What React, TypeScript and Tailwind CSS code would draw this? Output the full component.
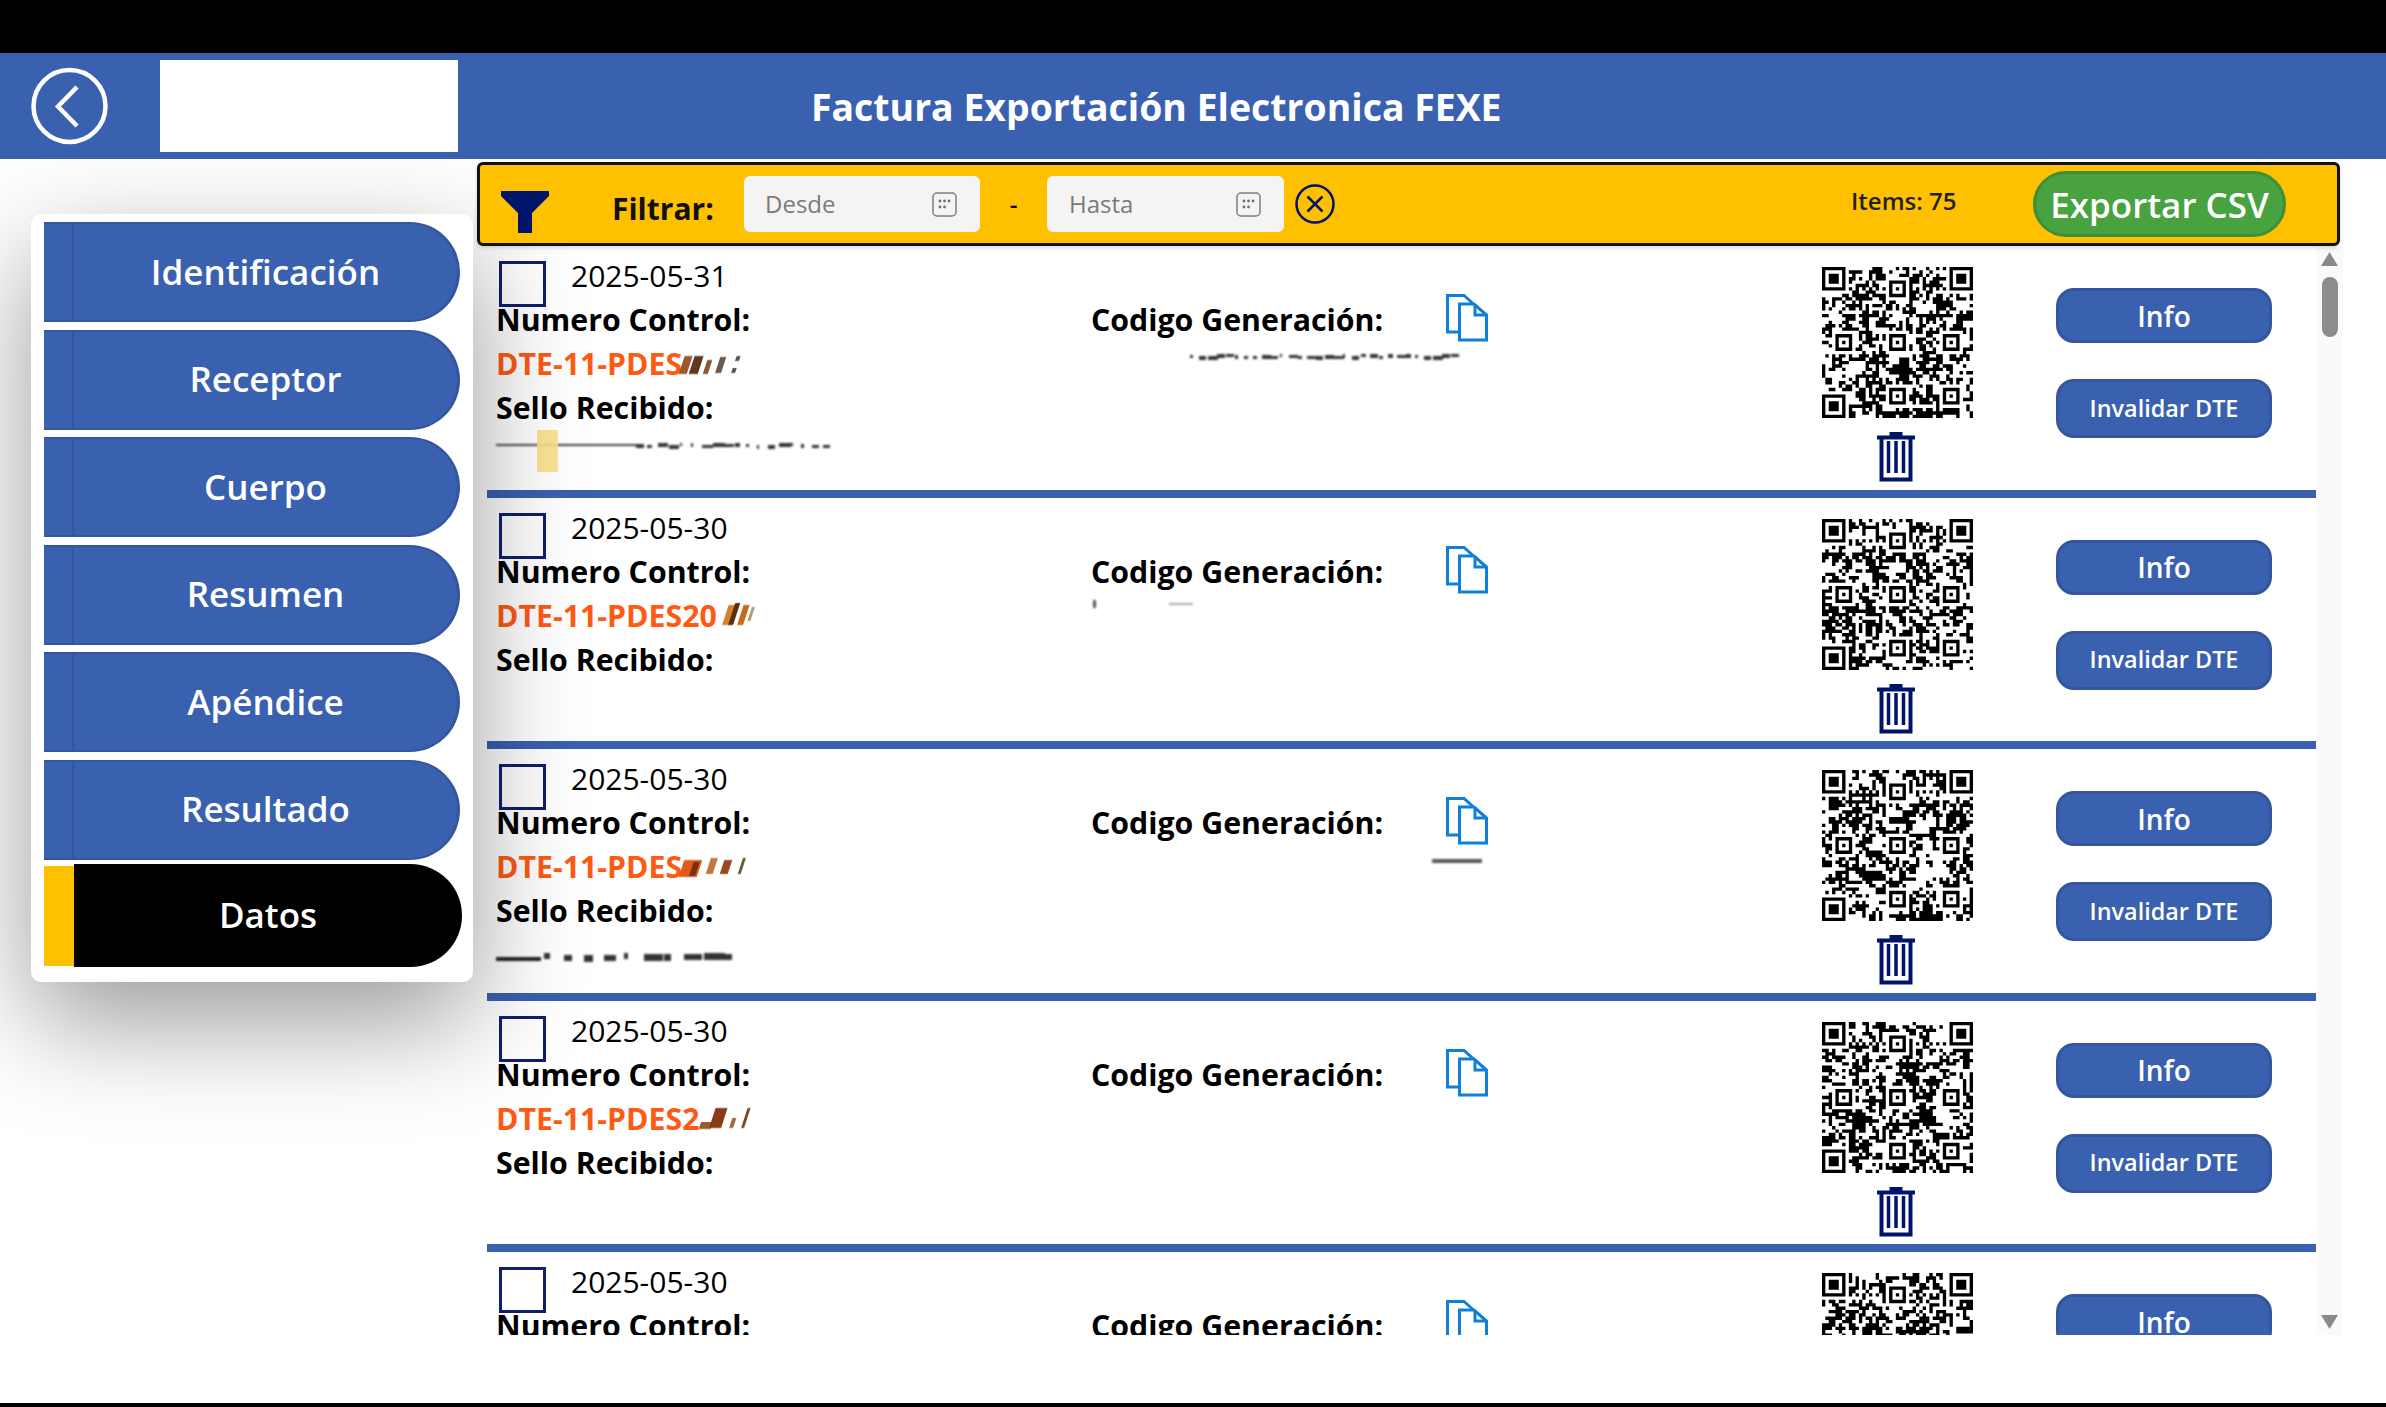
import { useMemo } from 'react';

const navItems = ['Identificación', 'Receptor', 'Cuerpo', 'Resumen', 'Apéndice', 'Resultado'];

type Mark = [number, number, number, number, string?];

type Row = {
  date: string;
  dte: string;
  dteSmudge: { width: number; marks: Mark[] };
  sello?: { width: number; marks: Mark[]; highlight?: boolean };
  codigo?: { left: number; top: number; width: number; marks: Mark[] };
  seed: number;
  partial?: boolean;
};

const dash = (from: number, to: number, step: number, y: number, h: number, seed: number) => {
  const marks: Mark[] = [];
  let s = seed;
  for (let x = from; x < to; x += step) {
    s = (s * 31 + 7) % 101;
    marks.push([x, 2 + (s % step), y + (s % 3) - 1, h + (s % 2)]);
  }
  return marks;
};

const rows: Row[] = [
  {
    date: '2025-05-31',
    dte: 'DTE-11-PDES',
    dteSmudge: {
      width: 66,
      marks: [
        [0, 8, 9, 18, '#9a5a2c'],
        [10, 9, 9, 18, '#5e3a20'],
        [24, 5, 13, 14, '#8a5a30'],
        [36, 6, 10, 16, '#6b5a48'],
        [52, 4, 9, 5, '#555'],
        [52, 4, 21, 5, '#555'],
      ],
    },
    sello: {
      width: 334,
      highlight: true,
      marks: [[0, 140, 14, 2, '#444'], ...dash(140, 334, 11, 14, 3, 5)],
    },
    codigo: { left: 99, top: 7, width: 270, marks: dash(0, 270, 9, 6, 3, 3) },
    seed: 11,
  },
  {
    date: '2025-05-30',
    dte: 'DTE-11-PDES20',
    dteSmudge: {
      width: 38,
      marks: [
        [8, 10, 6, 20, '#d9822b'],
        [14, 5, 4, 22, '#5a2e10'],
        [23, 6, 6, 20, '#c96a1a'],
        [32, 3, 8, 14, '#b89a78'],
      ],
    },
    codigo: { left: 2, top: 6, width: 110, marks: [[0, 3, 0, 8, '#555'], [76, 24, 3, 2, '#aaa']] },
    seed: 23,
  },
  {
    date: '2025-05-30',
    dte: 'DTE-11-PDES',
    dteSmudge: {
      width: 68,
      marks: [
        [0, 18, 10, 17, '#e0581a'],
        [10, 6, 12, 14, '#7a2e10'],
        [26, 7, 8, 16, '#c07a3a'],
        [40, 8, 10, 14, '#9a4a20'],
        [58, 3, 8, 16, '#6b5a30'],
      ],
    },
    sello: { width: 236, marks: [[0, 45, 24, 4, '#222'], ...dash(48, 236, 20, 21, 6, 9)] },
    codigo: { left: 341, top: 10, width: 54, marks: [[0, 50, 4, 4, '#555']] },
    seed: 37,
  },
  {
    date: '2025-05-30',
    dte: 'DTE-11-PDES2',
    dteSmudge: {
      width: 50,
      marks: [
        [2, 12, 20, 7, '#9a5a2a'],
        [12, 12, 6, 20, '#8a3a14'],
        [32, 4, 16, 10, '#a06a3a'],
        [44, 3, 6, 20, '#7a4a20'],
      ],
    },
    seed: 53,
  },
  {
    date: '2025-05-30',
    dte: '',
    dteSmudge: { width: 0, marks: [] },
    seed: 71,
    partial: true,
  },
];

const Smear = ({ width, height, marks, slant }: { width: number; height: number; marks: Mark[]; slant?: boolean }) => (
  <svg width={width} height={height} className={slant ? 'block -skew-x-[18deg] blur-[0.7px]' : 'block blur-[0.8px]'}>
    {marks.map(([x, w, y, h, c], i) => (
      <rect key={i} x={x} y={y} width={w} height={h} fill={c ?? '#333'} />
    ))}
  </svg>
);

const buildQr = (seed: number) => {
  const n = 45;
  const cells: boolean[][] = [];
  let s = seed * 7919 + 17;
  for (let y = 0; y < n; y++) {
    const line: boolean[] = [];
    for (let x = 0; x < n; x++) {
      s = (s * 1103515245 + 12345) & 0x7fffffff;
      const near = x > 0 && line[x - 1];
      const above = y > 0 && cells[y - 1][x];
      line.push((s >> 16) % 100 < (near ? 46 : 34) + (above ? 18 : 0));
    }
    cells.push(line);
  }
  const stamp = (ox: number, oy: number, size: number) => {
    for (let y = -1; y <= size; y++) {
      for (let x = -1; x <= size; x++) {
        const cy = cells[oy + y];
        if (!cy || cy[ox + x] === undefined) continue;
        const edge = x === 0 || y === 0 || x === size - 1 || y === size - 1;
        const inside = x >= 0 && y >= 0 && x < size && y < size;
        const core = size === 7 ? x >= 2 && x <= 4 && y >= 2 && y <= 4 : x === 2 && y === 2;
        cy[ox + x] = inside && (edge || core);
      }
    }
  };
  for (let i = 8; i < n - 8; i++) {
    cells[6][i] = i % 2 === 0;
    cells[i][6] = i % 2 === 0;
  }
  [[6, 22], [22, 6], [22, 22], [22, 38], [38, 22], [38, 38]].forEach(([x, y]) => stamp(x - 2, y - 2, 5));
  stamp(0, 0, 7);
  stamp(n - 7, 0, 7);
  stamp(0, n - 7, 7);
  let d = '';
  cells.forEach((line, y) =>
    line.forEach((on, x) => {
      if (on) d += `M${x} ${y}h1v1h-1z`;
    }),
  );
  return d;
};

const QrCode = ({ seed }: { seed: number }) => {
  const d = useMemo(() => buildQr(seed), [seed]);
  return (
    <svg viewBox="0 0 45 45" width={151} height={151} className="block blur-[0.5px]">
      <path d={d} fill="#000" />
    </svg>
  );
};

const CopyIcon = () => (
  <svg width={42} height={48} viewBox="0 0 42 48" fill="none" stroke="#0f7fdc" strokeWidth={3} className="block">
    <path d="M12 38H1.5V1.5H18L27 9.5" />
    <path d="M13.5 10H28L40.5 21V46H13.5Z" fill="#fff" />
    <path d="M29 10V21H40.5" />
  </svg>
);

const TrashIcon = () => (
  <svg width={38} height={50} viewBox="0 0 38 50" fill="none" stroke="#00146b" className="block">
    <path d="M14 4V1.5H24V4" fill="#00146b" strokeWidth={3} />
    <path d="M0 5.5H38" strokeWidth={4} />
    <path d="M4.5 6V47.5H33.5V6" strokeWidth={4} />
    <path d="M11.5 9V41M19 9V41M26.5 9V41" strokeWidth={3.5} />
  </svg>
);

const CalendarIcon = () => (
  <svg width={25} height={25} viewBox="0 0 25 25" fill="none" className="block">
    <rect x="1" y="1" width="23" height="23" rx="4" stroke="#7d7d7d" strokeWidth="1.5" />
    <g fill="#6e6e6e">
      <circle cx="8" cy="9" r="1.4" />
      <circle cx="12.5" cy="9" r="1.4" />
      <circle cx="17" cy="9" r="1.4" />
      <circle cx="8" cy="15" r="1.4" />
      <circle cx="12.5" cy="15" r="1.4" />
    </g>
  </svg>
);

const DateField = ({ label, className }: { label: string; className: string }) => (
  <div className={`flex h-[56px] items-center justify-between rounded-[6px] bg-[#f4f4f4] pr-[23px] text-[24px] text-[#7a7a7a] ${className}`}>
    <span>{label}</span>
    <CalendarIcon />
  </div>
);

const FilterBar = () => (
  <div className="relative z-20 flex h-[84px] w-[1863px] flex-none items-center rounded-[6px] border-[3px] border-[#111] bg-[#ffc000] pl-[21px] shadow-[0_2px_4px_rgba(0,0,0,0.15)]">
    <svg width={48} height={42} viewBox="0 0 48 42" className="mt-[16px] flex-none">
      <path d="M0 0H48V5L31 22V42H17V22L0 5Z" fill="#00146b" />
    </svg>
    <span className="ml-[63px] mt-[8px] w-[132px] text-[30px] font-bold text-[#111]">Filtrar:</span>
    <DateField label="Desde" className="w-[236px] pl-[21px]" />
    <span className="w-[67px] text-center text-[24px] font-semibold text-black">-</span>
    <DateField label="Hasta" className="w-[237px] pl-[22px]" />
    <svg width={40} height={40} viewBox="0 0 40 40" fill="none" stroke="#00146b" strokeWidth={2.5} className="ml-[11px] flex-none">
      <circle cx="20" cy="20" r="18.5" />
      <path d="M12.5 12.5L27.5 27.5M27.5 12.5L12.5 27.5" />
    </svg>
    <span className="mb-[6px] ml-[516px] w-[182px] text-[24px] font-semibold text-[#222]">Items: 75</span>
    <button className="h-[66px] w-[253px] rounded-full border-[3px] border-[#3f8f38] bg-[#48a23f] pt-[2px] text-[35px] font-semibold text-white">
      Exportar CSV
    </button>
  </div>
);

const RowItem = ({ row }: { row: Row }) => (
  <div className="flex h-[251.5px] flex-none border-b-[8px] border-[#3a60b0] pl-[9px]">
    <div className="flex w-[595px] flex-none flex-col">
      <div className="mt-[15px] flex h-[37px] items-start pl-[3px]">
        <div className="h-[46px] w-[47px] flex-none border-[3px] border-[#0f1f6e] bg-white" />
        <span className="ml-[25px] text-[30px] leading-[30px] text-black">{row.date}</span>
      </div>
      <div className="flex h-[44px] items-center text-[30.3px] font-bold text-black">Numero Control:</div>
      {!row.partial && (
        <>
          <div className="flex h-[44px] items-center text-[30.3px] font-bold text-[#ff5a14]">
            {row.dte}
            <Smear width={row.dteSmudge.width} height={34} marks={row.dteSmudge.marks} slant />
          </div>
          <div className="flex h-[44px] items-center text-[30.3px] font-bold text-black">Sello Recibido:</div>
        </>
      )}
      {row.sello && (
        <div className="relative h-[44px]">
          <Smear width={row.sello.width} height={44} marks={row.sello.marks} />
          {row.sello.highlight && <div className="absolute left-[41px] top-0 h-[42px] w-[21px] bg-[#fbe08a] opacity-90" />}
        </div>
      )}
    </div>
    <div className="flex w-[355px] flex-none flex-col pt-[52px]">
      <div className="flex h-[44px] items-center text-[30.3px] font-bold text-black">Codigo Generación:</div>
      {row.codigo && (
        <div style={{ marginLeft: row.codigo.left, marginTop: row.codigo.top }}>
          <Smear width={row.codigo.width} height={16} marks={row.codigo.marks} />
        </div>
      )}
    </div>
    <div className="w-[376px] flex-none pt-[48px]">
      <CopyIcon />
    </div>
    <div className="flex w-[151px] flex-none flex-col items-center pt-[21px]">
      <QrCode seed={row.seed} />
      {!row.partial && (
        <div className="mr-[4px] mt-[14px]">
          <TrashIcon />
        </div>
      )}
    </div>
    <div className="ml-[83px] flex w-[216px] flex-none flex-col pt-[42px]">
      <button className="h-[55px] flex-none rounded-[18px] border-[3px] border-[#34569e] bg-[#3a60b0] text-[28px] font-semibold text-white">
        Info
      </button>
      {!row.partial && (
        <button className="mt-[36px] h-[59px] flex-none rounded-[18px] border-[3px] border-[#34569e] bg-[#3a60b0] text-[23.4px] font-semibold text-white">
          Invalidar DTE
        </button>
      )}
    </div>
  </div>
);

const Scrollbar = () => (
  <div className="flex w-[27px] flex-none flex-col items-center bg-[#fafafa] pt-[6px]">
    <svg width={17} height={14} viewBox="0 0 17 14" className="flex-none">
      <path d="M8.5 0L17 14H0Z" fill="#8a8a8a" />
    </svg>
    <div className="mt-[11px] h-[60px] w-[16px] flex-none rounded-full bg-[#8c8c8c]" />
    <svg width={17} height={14} viewBox="0 0 17 14" className="mb-[6px] mt-auto flex-none">
      <path d="M0 0H17L8.5 14Z" fill="#8a8a8a" />
    </svg>
  </div>
);

export default function App() {
  return (
    <div className="flex h-[1407px] w-[2386px] flex-col overflow-hidden bg-white font-['Open_Sans',sans-serif]">
      <div className="relative z-20 h-[53px] flex-none bg-black" />
      <header className="relative z-20 flex h-[106px] flex-none items-center bg-[#3a60b0] pl-[31px]">
        <svg width={77} height={78} viewBox="0 0 77 78" fill="none" stroke="#fff" strokeWidth={4.5} className="flex-none">
          <circle cx="38.5" cy="39" r="36" />
          <path d="M46 20L27 39.5L46 59" />
        </svg>
        <div className="ml-[52px] h-[92px] w-[298px] flex-none bg-white" />
        <h1 className="ml-[353px] mt-[2px] text-[37.4px] font-bold text-white">Factura Exportación Electronica FEXE</h1>
      </header>

      <main className="flex min-h-0 flex-1">
        <div className="w-[477px] flex-none pl-[31px] pt-[55px]">
          <nav className="relative z-10 flex h-[768px] w-[442px] flex-col rounded-[10px] bg-white pl-[13px] pt-[8px] shadow-[0_40px_110px_rgba(0,0,0,0.4)]">
            {navItems.map((item) => (
              <div key={item} className="mb-[7.5px] h-[100px] flex-none">
                <div className="flex h-full w-[416px] overflow-hidden rounded-r-[50px] border-y-2 border-r-[3px] border-[#34569e] bg-[#3a60b0]">
                  <div className="h-full w-[30px] flex-none border-r-2 border-[#34569e]" />
                  <div className="flex flex-1 items-center justify-center text-[35px] font-semibold text-white">{item}</div>
                </div>
              </div>
            ))}
            <div className="-mt-[3px] flex h-[103px] w-[418px] flex-none items-center">
              <div className="h-[100px] w-[30px] flex-none bg-[#ffc000]" />
              <div className="flex h-full flex-1 items-center justify-center rounded-r-[52px] bg-black text-[35px] font-semibold text-white">
                Datos
              </div>
            </div>
          </nav>
        </div>

        <div className="flex min-w-0 flex-1 flex-col pt-[3px]">
          <FilterBar />
          <div className="flex h-[1089px] flex-none overflow-hidden pl-[10px]">
            <div className="w-[1829px] flex-none bg-white">
              {rows.map((row, i) => (
                <RowItem key={i} row={row} />
              ))}
            </div>
            <Scrollbar />
          </div>
        </div>
      </main>

      <div className="relative z-20 h-[4px] flex-none bg-black" />
    </div>
  );
}
